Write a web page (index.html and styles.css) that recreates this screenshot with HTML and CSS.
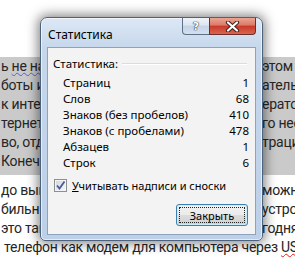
FILE: index.html
```html
<!DOCTYPE html>
<html lang="ru">
<head>
  <meta charset="UTF-8">
  <title>Статистика</title>
  <link rel="stylesheet" href="styles.css">
</head>
<body>
<div class="doc">
  <div class="shade">
    <div class="line"><span class="l">ь <span class="grammar">не на</span>шли</span><span class="gap"></span><span class="r">этом в комментариях</span></div>
    <div class="line"><span class="l">боты или</span><span class="gap"></span><span class="r">ательно</span></div>
    <div class="line"><span class="l">к интерн</span><span class="gap"></span><span class="r">ератора</span></div>
    <div class="line"><span class="l">тернете</span><span class="gap"></span><span class="r">го нео</span></div>
    <div class="line"><span class="l">во, отде</span><span class="gap"></span><span class="r">трации</span></div>
    <div class="line"><span class="l">Конечно</span><span class="gap"></span><span class="r"></span></div>
  </div>
  <div class="para">
    <div class="line"><span class="l">до выгод</span><span class="gap"></span><span class="r">можно</span></div>
    <div class="line"><span class="l">бильный</span><span class="gap"></span><span class="r">устройство</span></div>
    <div class="line"><span class="l">это такж</span><span class="gap"></span><span class="r">годня</span></div>
    <div class="line full">телефон как модем для компьютера через <span class="spell">USB</span></div>
  </div>
</div>

<div class="dialog">
  <div class="titlebar">
    <span class="title">Статистика</span>
    <div class="caption-btns">
      <div class="cap help"><span>?</span></div>
      <div class="cap close">
        <svg width="15" height="11" viewBox="0 0 15 11">
          <path d="M3 1.5 L12 9.5 M12 1.5 L3 9.5" stroke="#3b2623" stroke-width="4.2" stroke-linecap="round"/>
          <path d="M3 1.5 L12 9.5 M12 1.5 L3 9.5" stroke="#fff" stroke-width="2.2" stroke-linecap="round"/>
        </svg>
      </div>
    </div>
  </div>
  <div class="client">
    <div class="group-head">
      <span>Статистика:</span>
      <span class="rule"></span>
    </div>
    <div class="stats">
      <div class="row"><span>Страниц</span><span>1</span></div>
      <div class="row"><span>Слов</span><span>68</span></div>
      <div class="row"><span>Знаков (без пробелов)</span><span>410</span></div>
      <div class="row"><span>Знаков (с пробелами)</span><span>478</span></div>
      <div class="row"><span>Абзацев</span><span>1</span></div>
      <div class="row"><span>Строк</span><span>6</span></div>
    </div>
    <label class="check-row">
      <span class="checkbox">
        <svg width="11" height="11" viewBox="0 0 11 11">
          <path d="M2 5.5 L4.5 8.5 L9.5 1.5" fill="none" stroke="#4a5b95" stroke-width="1.8"/>
        </svg>
      </span>
      <span><u>У</u>читывать надписи и сноски</span>
    </label>
    <div class="actions">
      <button class="btn"><span class="focus">Закрыть</span></button>
    </div>
  </div>
</div>
</body>
</html>
```

FILE: styles.css
```css
body {
  margin: 0;
  width: 295px;
  height: 261px;
  overflow: hidden;
  position: relative;
  background-color: #fff;
  font-family: Roboto, "Liberation Sans", sans-serif;
}

.doc {
  padding-top: 57px;
  font-size: 14px;
  letter-spacing: -0.25px;
  color: #262626;
}

.shade {
  background-color: #cacaca;
  padding-bottom: 4px;
}

.para {
  margin-top: 6px;
}

.line {
  display: grid;
  grid-template-columns: 44px 218px 1fr;
  height: 19px;
  line-height: 19px;
  white-space: nowrap;
}

.line .l,
.line .r {
  overflow: hidden;
}

.line .l {
  padding-left: 1px;
}

.line.full {
  display: block;
  padding-left: 4px;
}

.grammar {
  text-decoration: underline wavy #5b5bd6;
  text-decoration-thickness: 1px;
}

.spell {
  text-decoration: underline wavy #e02020;
  text-decoration-thickness: 1px;
}

/* dialog */
.dialog {
  position: absolute;
  left: 40px;
  top: 17px;
  width: 223px;
  height: 224px;
  box-sizing: border-box;
  border: 1px solid #4d627c;
  border-radius: 7px 7px 5px 5px;
  background: linear-gradient(to bottom, #dde8f5 0, #c6d7ec 30px, #bdd0e8 100%);
  box-shadow: 0 0 12px 2px rgba(0, 0, 0, 0.5), inset 0 0 0 1px rgba(255, 255, 255, 0.6);
  display: flex;
  flex-direction: column;
  font-family: "Noto Sans", sans-serif;
  font-size: 11.5px;
  color: #000;
}

.titlebar {
  position: relative;
  height: 29px;
  display: flex;
  align-items: center;
  padding: 3px 0 0 7px;
  box-sizing: border-box;
}

.title {
  font-size: 12px;
}

.caption-btns {
  position: absolute;
  top: 0;
  right: 6px;
  display: flex;
}

.cap {
  height: 17px;
  display: flex;
  align-items: center;
  justify-content: center;
  box-sizing: border-box;
  border: 1px solid #5f7189;
  border-top: none;
}

.help {
  width: 27px;
  border-radius: 0 0 0 4px;
  border-right: none;
  background: linear-gradient(to bottom, #eef3f9 0, #dbe5f1 45%, #c3d2e5 50%, #d3e0ef 100%);
}

.help span {
  font-family: "DejaVu Sans", sans-serif;
  font-weight: bold;
  font-size: 11px;
  color: #fff;
  text-shadow: 0 0 1px #2c3a4d, 0 0 1px #2c3a4d, 0 0 1px #2c3a4d;
}

.close {
  width: 47px;
  border-color: #6b2f28;
  border-radius: 0 0 4px 0;
  background: linear-gradient(to bottom, #eba493 0, #dc7a66 45%, #c8392a 50%, #d8654f 100%);
}

.client {
  flex: 1;
  margin: 0 6px 5px 6px;
  border: 1px solid #8ea2bc;
  background-color: #f3f3f3;
  display: flex;
  flex-direction: column;
}

.group-head {
  display: flex;
  align-items: center;
  gap: 4px;
  height: 15px;
  margin: 8px 8px 0 5px;
}

.rule {
  flex: 1;
  border-top: 1px solid #d5dde6;
  border-bottom: 1px solid #fff;
}

.stats {
  margin: 4px 6px 0 15px;
}

.row {
  display: flex;
  justify-content: space-between;
  height: 16px;
  line-height: 16px;
}

.check-row {
  display: flex;
  align-items: center;
  gap: 5px;
  height: 16px;
  margin: 6px 0 0 6px;
  font-size: 11px;
}

.checkbox {
  width: 13px;
  height: 13px;
  box-sizing: border-box;
  border: 1px solid #8e8f8f;
  background: linear-gradient(to bottom right, #d0d4da, #fafafa);
  box-shadow: inset 0 0 0 1px #f4f4f4;
  display: flex;
  align-items: center;
  justify-content: center;
}

.actions {
  display: flex;
  justify-content: flex-end;
  margin: 11px 7px 0 0;
}

.btn {
  width: 72px;
  height: 22px;
  padding: 2px;
  border: 1px solid #3c7fb1;
  border-radius: 3px;
  background: linear-gradient(to bottom, #f2f2f2 0, #ebebeb 50%, #dddddd 50%, #cfcfcf 100%);
  box-shadow: inset 0 0 0 1px #c9ecfb;
  font-family: "Noto Sans", sans-serif;
  font-size: 11px;
  color: #000;
  display: flex;
}

.focus {
  flex: 1;
  border: 1px dotted #222;
  display: flex;
  align-items: center;
  justify-content: center;
}
```
